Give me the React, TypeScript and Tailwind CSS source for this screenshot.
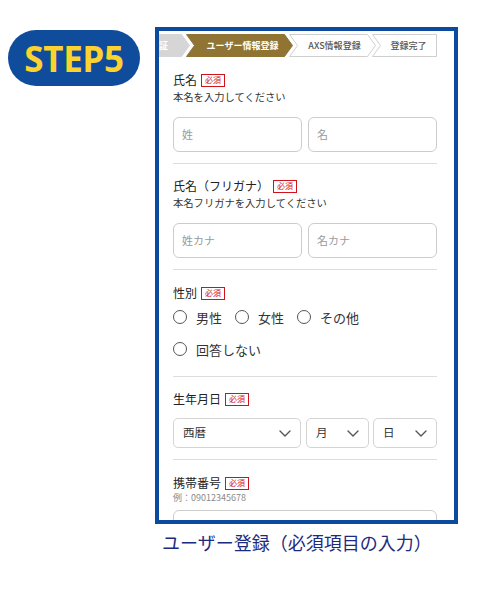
import type { ReactNode } from 'react'

type CrumbProps = {
  w: number
  label: string
  tone: 'done' | 'current' | 'todo'
  notch?: boolean
  tip?: boolean
  className?: string
  labelClass?: string
}

const H = 23
const ARROW = 8

// One step of the progress bar: a chevron-shaped box with the step name on it
function Crumb({ w, label, tone, notch = true, tip = true, className = '', labelClass = '' }: CrumbProps) {
  const n = notch ? ARROW : 0
  const t = tip ? ARROW : 0
  const pts = [
    [0.5, 0.5],
    [w - t - 0.5, 0.5],
    [w - 0.5, H / 2],
    [w - t - 0.5, H - 0.5],
    [0.5, H - 0.5],
    [n + 0.5, H / 2],
  ]
    .map((p) => p.join(','))
    .join(' ')

  const fill = tone === 'done' ? '#d6d6d6' : tone === 'current' ? '#8f7433' : '#ffffff'
  const stroke = tone === 'todo' ? '#cfcfcf' : fill

  return (
    <div className={`relative h-[23px] shrink-0 ${className}`}>
      <svg className="absolute inset-0" width={w} height={H} viewBox={`0 0 ${w} ${H}`}>
        <polygon points={pts} fill={fill} stroke={stroke} strokeWidth={1} />
      </svg>
      <div
        className={`relative flex h-full items-center text-[9px] leading-none ${labelClass} ${
          tone === 'todo' ? 'text-[#555] font-medium' : 'text-white font-bold'
        }`}
      >
        {label}
      </div>
    </div>
  )
}

function Required() {
  return (
    <span className="ml-[4px] flex h-[13px] items-center border border-[#d0121b] px-[3px] text-[8px] leading-none text-[#d0121b]">
      必須
    </span>
  )
}

function FieldLabel({ children }: { children: ReactNode }) {
  return (
    <div className="flex h-[18px] items-center">
      <span className="text-[12px] leading-[18px] text-[#222]">{children}</span>
      <Required />
    </div>
  )
}

function TextBox({ placeholder }: { placeholder: string }) {
  return (
    <div className="flex h-[35px] items-center rounded-[6px] border border-[#cccccc] pl-[8px] text-[11px] text-[#9a9a9a]">
      {placeholder}
    </div>
  )
}

function Radio({ label }: { label: string }) {
  return (
    <div className="flex items-center">
      <span className="h-[14px] w-[14px] rounded-full border-[1.5px] border-[#555]" />
      <span className="ml-[9px] text-[13px] leading-none text-[#333]">{label}</span>
    </div>
  )
}

function Chevron() {
  return (
    <svg width="12" height="7" viewBox="0 0 12 7" fill="none">
      <polyline points="1,1 6,6 11,1" stroke="#555" strokeWidth="1.4" strokeLinecap="round" strokeLinejoin="round" />
    </svg>
  )
}

function SelectBox({ value, className }: { value: string; className: string }) {
  return (
    <div
      className={`flex h-[30px] items-center justify-between rounded-[5px] border border-[#d4d4d4] pl-[9px] pr-[9px] text-[11.5px] text-[#333] ${className}`}
    >
      <span>{value}</span>
      <Chevron />
    </div>
  )
}

export default function App() {
  return (
    <div className="flex h-[600px] w-[500px] bg-white font-['Noto_Sans_CJK_JP','Noto_Sans',sans-serif]">
      {/* step badge */}
      <div className="pl-[8px] pt-[30px]">
        <div className="flex h-[56px] w-[132px] items-center justify-center rounded-full bg-[#0f4c9c]">
          <span className="font-['Noto_Sans',sans-serif] text-[35px] font-bold leading-none tracking-[-0.3px] text-[#fcd22e]">
            STEP5
          </span>
        </div>
      </div>

      <div className="ml-[15px] pt-[27px]">
        {/* phone frame */}
        <div className="h-[497px] w-[303px] overflow-hidden border-4 border-[#0b4a9e] bg-white">
          {/* progress */}
          <div className="flex pt-[3px]">
            <Crumb w={80} label="認証" tone="done" notch={false} className="ml-[-49px] w-[80px]" labelClass="justify-end pr-[22px]" />
            <Crumb w={107} label="ユーザー情報登録" tone="current" className="ml-[-4px] w-[107px]" labelClass="justify-center pl-[6px]" />
            <Crumb w={87} label="AXS情報登録" tone="todo" className="ml-[-4px] w-[87px]" labelClass="justify-center pl-[4px]" />
            <Crumb w={65} label="登録完了" tone="todo" tip={false} className="ml-[-4px] w-[65px]" labelClass="justify-center pl-[8px]" />
          </div>

          <div className="mt-[14px] pl-[14px] pr-[17px]">
            {/* name */}
            <section className="border-b border-[#dddddd] pb-[11px]">
              <FieldLabel>氏名</FieldLabel>
              <p className="text-[10.3px] leading-[16px] text-[#333]">本名を入力してください</p>
              <div className="mt-[12px] grid grid-cols-2 gap-[6px]">
                <TextBox placeholder="姓" />
                <TextBox placeholder="名" />
              </div>
            </section>

            {/* kana */}
            <section className="border-b border-[#dddddd] pb-[11px] pt-[13px]">
              <FieldLabel>氏名（フリガナ）</FieldLabel>
              <p className="text-[10.3px] leading-[16px] text-[#333]">本名フリガナを入力してください</p>
              <div className="mt-[12px] grid grid-cols-2 gap-[6px]">
                <TextBox placeholder="姓カナ" />
                <TextBox placeholder="名カナ" />
              </div>
            </section>

            {/* gender */}
            <section className="border-b border-[#dddddd] pb-[10px] pt-[14px]">
              <FieldLabel>性別</FieldLabel>
              <div className="flex h-[30px] items-center gap-[13px]">
                <Radio label="男性" />
                <Radio label="女性" />
                <Radio label="その他" />
              </div>
              <div className="flex h-[34px] items-center">
                <Radio label="回答しない" />
              </div>
            </section>

            {/* birthday */}
            <section className="border-b border-[#dddddd] pb-[11px] pt-[13px]">
              <FieldLabel>生年月日</FieldLabel>
              <div className="mt-[10px] flex">
                <SelectBox value="西暦" className="w-[128px]" />
                <SelectBox value="月" className="ml-[5px] w-[63px]" />
                <SelectBox value="日" className="ml-[4px] w-[64px]" />
              </div>
            </section>

            {/* phone */}
            <section className="pt-[14px]">
              <FieldLabel>携帯番号</FieldLabel>
              <p className="text-[9px] leading-[12px] text-[#8a8a8a]">例：09012345678</p>
              <div className="mt-[6px] h-[35px] rounded-[6px] border border-[#cccccc]" />
            </section>
          </div>
        </div>

        <p className="mt-[8px] pl-[7px] text-[18px] leading-[20px] text-[#1e2a7d]">
          ユーザー登録（必須項目の入力）
        </p>
      </div>
    </div>
  )
}
